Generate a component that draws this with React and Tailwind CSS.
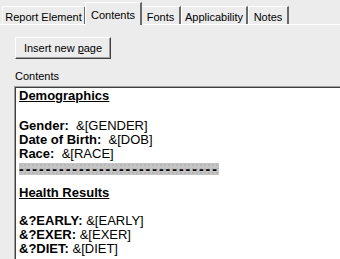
import React from "react";

const tabs = [
  { label: "Report Element", w: "w-[84px]" },
  { label: "Contents", w: "w-[57px]", active: true },
  { label: "Fonts", w: "w-[40px]" },
  { label: "Applicability", w: "w-[67px]" },
  { label: "Notes", w: "w-[41px]" },
];

function Tab({ label, w, active }) {
  if (active) {
    return (
      <div
        className={`${w} h-[23px] -mb-px -mx-[1px] relative z-10 flex justify-center pt-[4px] bg-[#ececec] border-t border-l border-white border-r-2 border-r-[#6a6a6a]`}
      >
        {label}
      </div>
    );
  }
  return (
    <div
      className={`${w} h-[18px] flex justify-center pt-[2px] border-t border-l border-white border-r-2 border-r-[#6a6a6a]`}
    >
      {label}
    </div>
  );
}

export default function App() {
  return (
    <div className="w-[340px] h-[259px] overflow-hidden bg-[#ececec] text-[11px] text-black font-['Liberation_Sans',Arial,sans-serif]">
      <div className="flex items-end h-[24px] pl-[2px]">
        {tabs.map((t) => (
          <Tab key={t.label} {...t} />
        ))}
      </div>

      <div className="border-t border-white pt-[12px] pl-[15px] h-[235px]">
        <button className="w-[96px] h-[22px] bg-[#ececec] border-t border-l border-white border-r border-b border-r-[#404040] border-b-[#404040] shadow-[inset_-1px_-1px_0_#a0a0a0] text-[11px] flex items-center justify-center">
          Insert new <span className="underline ml-[3px]">p</span>age
        </button>

        <p className="mt-[11px] leading-[13px]">Contents</p>

        <div className="mt-[3px] -ml-[1px] h-[200px] border-t border-l border-[#a0a0a0]">
          <div className="h-full bg-white border-t border-l border-[#404040] pl-[3px] pt-[1px] text-[13px] leading-[14px]">
            <p className="font-bold underline">Demographics</p>
            <p className="h-[16px]"></p>
            <p>
              <b>Gender:</b>&nbsp; &amp;[GENDER]
            </p>
            <p>
              <b>Date of Birth:</b>&nbsp; &amp;[DOB]
            </p>
            <p>
              <b>Race:</b>&nbsp; &amp;[RACE]
            </p>
            <div className="mt-[2px] w-[200px] h-[12px] bg-[#c4c4c4] bg-[radial-gradient(#a8a8a8_0.6px,transparent_0.8px)] bg-[length:4px_4px]">
              <p className="text-[14px] font-bold leading-[12px] tracking-[2px] whitespace-nowrap">
                ------------------------------
              </p>
            </div>
            <p className="mt-[11px] font-bold underline">Health Results</p>
            <p className="h-[14px]"></p>
            <p>
              <b>&amp;?EARLY:</b> &amp;[EARLY]
            </p>
            <p>
              <b>&amp;?EXER:</b> &amp;[EXER]
            </p>
            <p>
              <b>&amp;?DIET:</b> &amp;[DIET]
            </p>
          </div>
        </div>
      </div>
    </div>
  );
}
